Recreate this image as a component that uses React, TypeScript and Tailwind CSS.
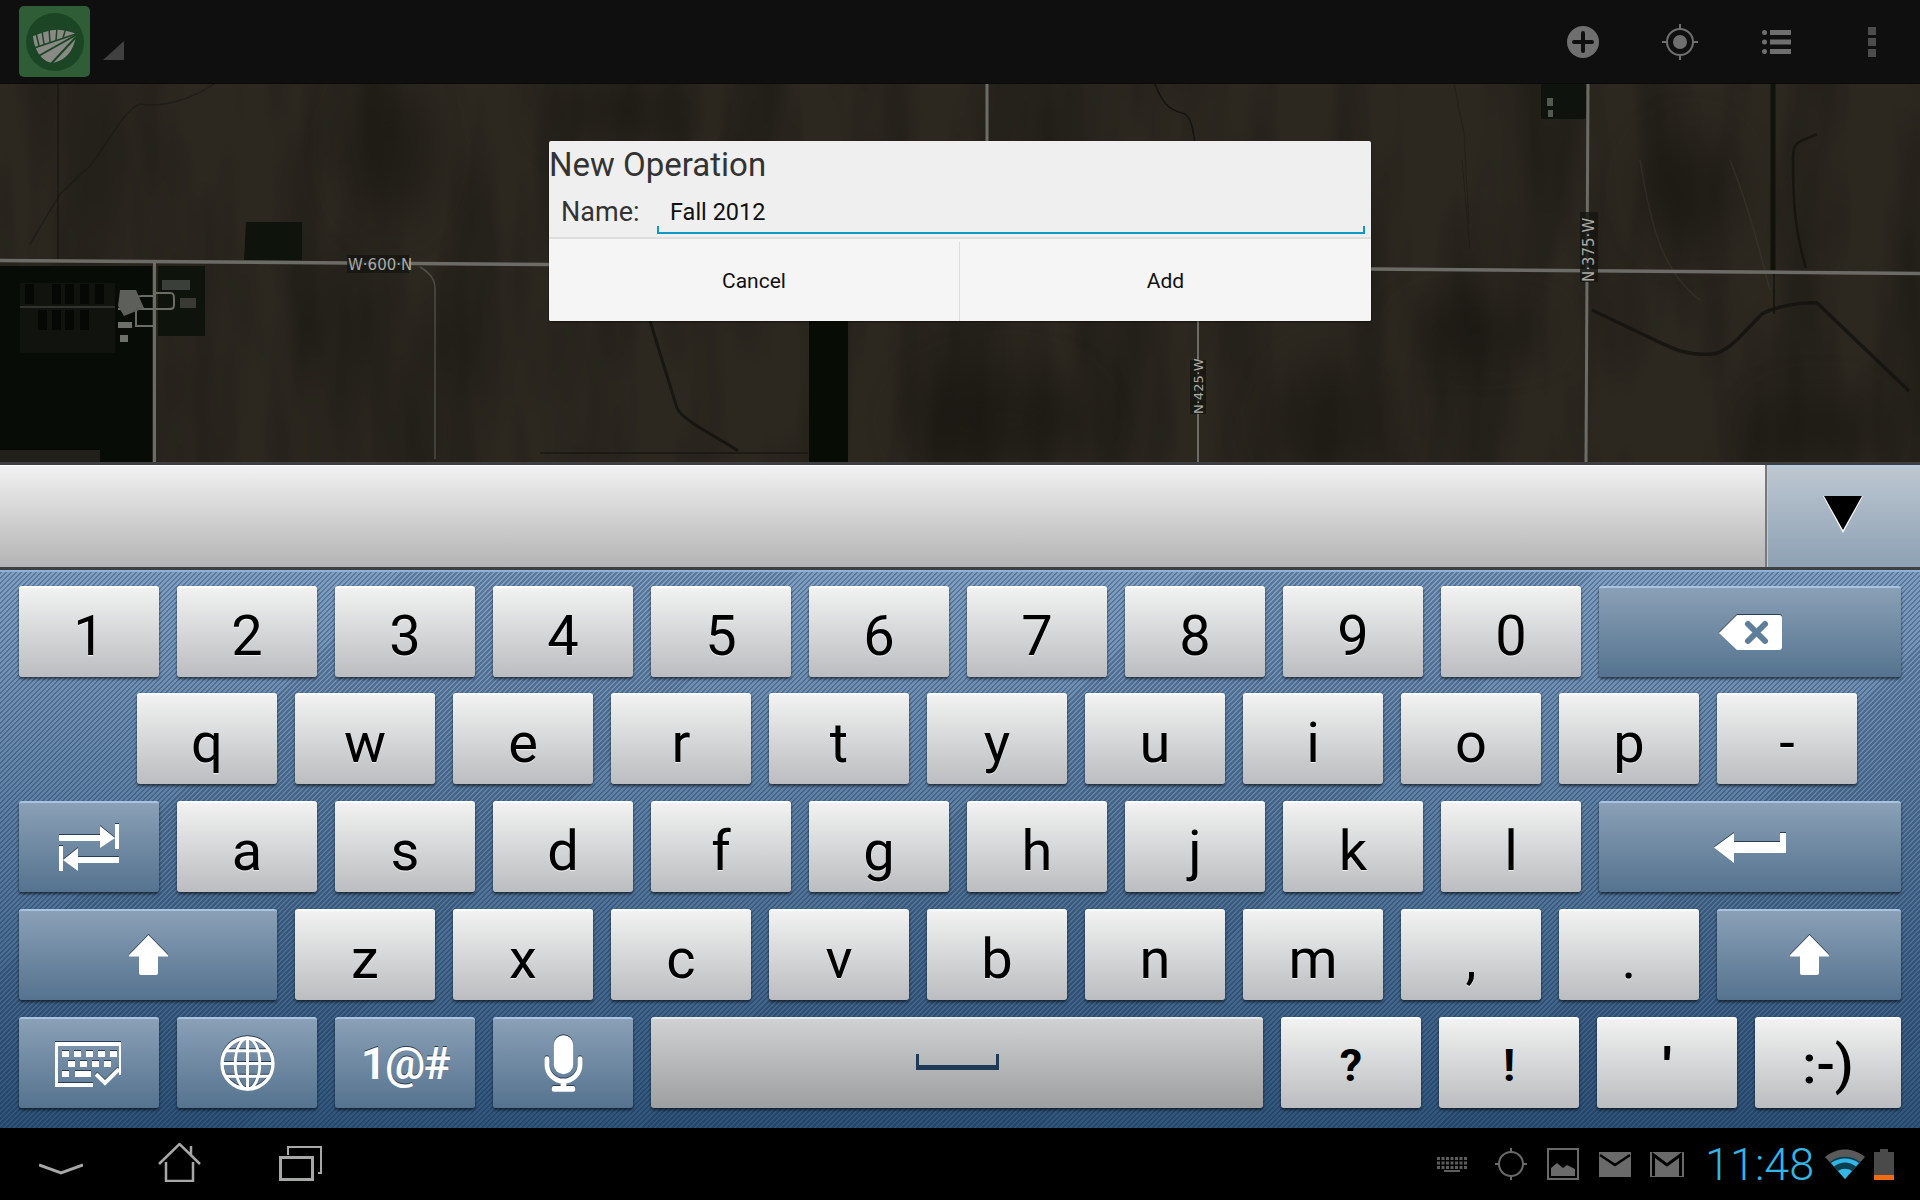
import type { ReactNode } from 'react'

const iconEdge = 'drop-shadow-[0_-1px_0_#2b3d52]'

function Key({
  width = 140,
  kind = 'white',
  children,
}: {
  width?: number
  kind?: 'white' | 'blue' | 'space'
  children?: ReactNode
}) {
  const look =
    kind === 'blue'
      ? 'bg-linear-to-b from-[#8aa0b6] to-[#55738f] border-t-[#a9c4e0] text-white'
      : kind === 'space'
        ? 'bg-linear-to-b from-[#d0d1d2] to-[#9e9fa1] border-t-[#e6e7e7] text-black'
        : 'bg-linear-to-b from-[#f1f2f1] to-[#bcbdc0] border-t-white text-black'
  return (
    <div
      style={{ width }}
      className={`${look} relative flex h-[91px] shrink-0 items-center justify-center rounded-[3px] border-t-2 shadow-[0_2px_3px_rgba(0,0,0,0.6)]`}
    >
      {children}
    </div>
  )
}

function Letter({ children }: { children: string }) {
  return (
    <span className="pt-[6px] text-[56px] leading-none font-normal [text-shadow:0_1px_1px_rgba(255,255,255,0.7)]">
      {children}
    </span>
  )
}

function ShiftIcon() {
  return (
    <svg viewBox="0 0 39 41" className={`-mt-[2px] h-[41px] w-[39px] ${iconEdge}`}>
      <path d="M19.5 1 39 21v1.500H29V39a2 2 0 0 1-2 2H12a2 2 0 0 1-2-2V22.500H0V21z" fill="#fff" />
    </svg>
  )
}

function BackspaceIcon() {
  return (
    <svg viewBox="0 0 63 35" className={`h-[35px] w-[63px] ${iconEdge}`}>
      <path d="M18 0h42a3 3 0 0 1 3 3v29a3 3 0 0 1-3 3H18L0 18z" fill="#fff" />
      <path d="M29 9l17 17M46 9 29 26" stroke="#5f7e9b" strokeWidth="6" strokeLinecap="round" />
    </svg>
  )
}

function TabIcon() {
  return (
    <svg viewBox="0 0 60 47" className={`h-[47px] w-[60px] ${iconEdge}`}>
      <g fill="#fff">
        <rect x="0" y="11" width="42" height="6" />
        <path d="M41 2 56 14 41 24z" />
        <rect x="56" y="0" width="4" height="25" />
        <rect x="18" y="33" width="42" height="6" />
        <path d="M19 24 4 36l15 11z" />
        <rect x="0" y="22" width="4" height="25" />
      </g>
    </svg>
  )
}

function EnterIcon() {
  return (
    <svg viewBox="0 0 72 30" className={`h-[30px] w-[72px] ${iconEdge}`}>
      <path d="M20 0v9h46V0h6v20H20v10L0 14.500z" fill="#fff" />
    </svg>
  )
}

function KeyboardIcon() {
  const top = [17, 29, 41, 53]
  return (
    <svg viewBox="0 0 68 46" className={`h-[46px] w-[68px] ${iconEdge}`}>
      <path d="M0 1h66v33h-2V5H3v37h35v4H0z" fill="#fff" />
      <g fill="#fff">
        <rect x="7" y="10" width="7" height="6" />
        {top.map((x) => (
          <rect key={x} x={x + 2} y="10" width="7" height="6" />
        ))}
        {[13, 25, 37, 49].map((x) => (
          <rect key={x} x={x} y="20" width="7" height="6" />
        ))}
        <rect x="7" y="30" width="7" height="6" />
        <rect x="20" y="30" width="16" height="6" />
      </g>
      <path d="M41 33l9 9 14-14" fill="none" stroke="#fff" strokeWidth="4" />
    </svg>
  )
}

function GlobeIcon() {
  return (
    <svg viewBox="0 0 56 56" className={`h-[55px] w-[55px] ${iconEdge}`}>
      <g fill="none" stroke="#fff" strokeWidth="3">
        <ellipse cx="28" cy="28" rx="26" ry="26" strokeWidth="3.500" />
        <ellipse cx="28" cy="28" rx="12.500" ry="26" />
        <path d="M28 2v52M2 28h52M6 15h44M6 41h44" />
      </g>
    </svg>
  )
}

function MicIcon() {
  return (
    <svg viewBox="0 0 40 58" className={`h-[57px] w-[39px] ${iconEdge}`}>
      <rect x="10" y="0" width="20" height="40" rx="10" fill="#fff" />
      <path d="M3 24v6a17 17 0 0 0 34 0v-6" fill="none" stroke="#fff" strokeWidth="5" strokeLinecap="round" />
      <rect x="17" y="46" width="6" height="8" fill="#fff" />
      <rect x="8" y="52" width="24" height="6" rx="2" fill="#fff" />
    </svg>
  )
}

function SpaceIcon() {
  return (
    <svg viewBox="0 0 83 20" className="-mt-[3px] h-[20px] w-[83px]">
      <path d="M1.500 2v11M81.500 2v11" fill="none" stroke="#1f3a57" strokeWidth="3" />
      <path d="M0 15.500h83" fill="none" stroke="#1f3a57" strokeWidth="5" />
    </svg>
  )
}

function MapLayer() {
  return (
    <svg viewBox="0 84 1920 378" className="absolute inset-0 h-full w-full">
      <defs>
        <filter id="soft" x="-40%" y="-40%" width="180%" height="180%" colorInterpolationFilters="sRGB">
          <feGaussianBlur stdDeviation="22" />
        </filter>
        <filter id="streak" x="0" y="0" width="100%" height="100%" colorInterpolationFilters="sRGB">
          <feTurbulence type="fractalNoise" baseFrequency="0.018 0.004" numOctaves="3" seed="7" />
          <feColorMatrix values="0 0 0 0 0  0 0 0 0 0  0 0 0 0 0  0 0 0 1.700 -0.620" />
        </filter>
      </defs>
      <rect x="0" y="84" width="1920" height="378" fill="#2c2820" />
      <rect x="0" y="84" width="1920" height="378" filter="url(#streak)" opacity="0.3" />
      <g filter="url(#soft)" fill="#17150f" opacity="0.55">
        <ellipse cx="390" cy="150" rx="40" ry="70" />
        <ellipse cx="620" cy="110" rx="70" ry="30" />
        <ellipse cx="1000" cy="420" rx="90" ry="50" />
        <ellipse cx="1330" cy="420" rx="50" ry="60" />
        <ellipse cx="1480" cy="330" rx="70" ry="20" />
        <ellipse cx="1820" cy="430" rx="60" ry="30" />
        <ellipse cx="1690" cy="190" rx="45" ry="55" />
      </g>

      {/* tree lines and farm yards */}
      <rect x="0" y="266" width="152" height="196" fill="#070c06" />
      <rect x="0" y="450" width="100" height="12" fill="#22201a" />
      <rect x="158" y="266" width="47" height="70" fill="#0e130c" />
      <rect x="20" y="283" width="95" height="70" fill="#11140e" />
      {[25, 52, 65, 80, 95].map((x) => (
        <rect key={x} x={x} y="284" width="9" height="20" fill="#060806" />
      ))}
      {[38, 52, 65, 80].map((x) => (
        <rect key={x} x={x} y="310" width="9" height="20" fill="#060806" />
      ))}
      <path d="M246 222h56v38h-58z" fill="#0e140c" />
      <rect x="809" y="321" width="39" height="141" fill="#070c05" />
      <rect x="1541" y="84" width="45" height="35" rx="2" fill="#0e130d" />
      <rect x="1547" y="98" width="6" height="8" fill="#55584f" />
      <rect x="1548" y="110" width="5" height="7" fill="#55584f" />
      <path d="M1773 84v186" stroke="#0b1008" strokeWidth="5" fill="none" opacity="0.85" />

      {/* field drains */}
      <g fill="none" stroke="#15130f">
        <path d="M58 84v176" strokeWidth="1.500" opacity="0.7" />
        <path d="M214 84c-20 14-50 24-74 20-16 6-30 36-50 62l-30 28-30 50" strokeWidth="1.500" opacity="0.45" />
        <path d="M1592 310l50 24c30 14 42 22 70 20 16-1 30-20 50-40 14-8 40-12 55-11l92 88" strokeWidth="3.500" opacity="0.85" />
        <path d="M1817 134l-18 8c-6 4-6 10-6 20 0 40 2 70 13 106" strokeWidth="2.500" opacity="0.8" />
        <path d="M1774 272v42" strokeWidth="1.500" />
        <path d="M650 321l27 87c6 14 50 34 61 43" strokeWidth="3" opacity="0.85" />
        <path d="M540 453h268" strokeWidth="1.500" opacity="0.8" />
        <path d="M1155 84c10 26 18 26 30 30 8 6 8 20 10 28" strokeWidth="1.500" />
        <path d="M1454 84l10 50 5 90M1462 160l8 90" strokeWidth="1" opacity="0.4" />
      </g>
      <path d="M1640 160c10 60 20 110 60 140M1730 160c24 60 34 110 40 130" fill="none" stroke="#47433a" strokeWidth="1.500" opacity="0.35" />

      {/* roads */}
      <g fill="none" stroke="#6c6c67">
        <path d="M0 260.500 549 264.500" strokeWidth="3.500" />
        <path d="M1371 269 1920 273.500" strokeWidth="3.500" />
        <path d="M154.500 260v202" strokeWidth="3" />
        <path d="M1588 84 1586 462" strokeWidth="3" />
        <path d="M1198 321v141" strokeWidth="2" />
        <path d="M987 84v57" strokeWidth="3" />
        <path d="M420 267c10 6 15 12 15 22v170" strokeWidth="1.500" opacity="0.55" />
        <path d="M154 296h-12c-5 0-6 2-6 8v22h18M154 293h16c4 0 4 2 4 8v4c0 4-2 4-6 4h-14M154 309h-36" strokeWidth="2" />
        <path d="M20 307h95" strokeWidth="1" opacity="0.7" />
      </g>
      <path d="M120 290l16 0 8 18-20 8-6-10z" fill="#5c5f5a" />
      <rect x="118" y="322" width="14" height="6" fill="#6e6f69" />
      <rect x="120" y="335" width="8" height="7" fill="#6e6f69" />
      <rect x="162" y="280" width="28" height="10" fill="#5a5e58" opacity="0.6" />
      <rect x="180" y="298" width="16" height="10" fill="#4c4c44" opacity="0.7" />

      {/* road labels */}
      <g fontFamily="'DejaVu Sans', sans-serif" fontSize="15" fill="#aaaaa5">
        <rect x="347" y="255" width="62" height="18" fill="#151512" opacity="0.8" />
        <text x="348" y="270">W·600·N</text>
        <rect x="1580" y="212" width="18" height="70" fill="#151512" opacity="0.8" />
        <text transform="translate(1594 282) rotate(-90)">N·375·W</text>
        <rect x="1190" y="360" width="16" height="54" fill="#151512" opacity="0.8" />
        <text fontSize="13" transform="translate(1203 414) rotate(-90)">N·425·W</text>
      </g>
    </svg>
  )
}

function ActionBar() {
  return (
    <div className="flex h-[84px] shrink-0 items-center border-b border-[#0a0a0a] bg-[#0f0f0f]">
      <div className="ml-[19px] flex h-[71px] w-[71px] items-center justify-center rounded-[5px] bg-[#2f5d35]">
        <svg viewBox="0 0 58 58" className="h-[58px] w-[58px]">
          <circle cx="29" cy="29" r="29" fill="#1c4526" />
          <path d="M7 23c10-3 18-7 27-6 6 .5 12 2 16 4-1 15-10 27-24 29C15 48 8 36 7 23z" fill="#8a8a85" />
          <g stroke="#1c4526" fill="none">
            <path d="M50 21 5 36" strokeWidth="1.800" />
            <path d="M50 22 9 45" strokeWidth="2" />
            <path d="M50 24 24 52" strokeWidth="2" />
            <path d="M13 33 10 20M18 31 16 18M24 29 23 16M30 27 31 15M37 25 40 15" strokeWidth="1.500" />
          </g>
        </svg>
      </div>
      <svg viewBox="0 0 21 19" className="mt-[18px] ml-[13px] h-[19px] w-[21px]">
        <path d="M21 0v19H0z" fill="#404040" />
      </svg>
      <div className="flex-1" />
      <svg viewBox="0 0 34 34" className="mr-[62px] h-[34px] w-[34px]">
        <circle cx="17" cy="17" r="16" fill="#6f6f6f" />
        <path d="M17 8v18M8 17h18" stroke="#0f0f0f" strokeWidth="4" strokeLinecap="round" />
      </svg>
      <svg viewBox="0 0 36 36" className="mr-[64px] h-[36px] w-[36px]">
        <circle cx="18" cy="18" r="7" fill="#6f6f6f" />
        <circle cx="18" cy="18" r="13" fill="none" stroke="#6f6f6f" strokeWidth="2" />
        <path d="M18 0v6M18 30v6M0 18h6M30 18h6" stroke="#6f6f6f" strokeWidth="2" />
      </svg>
      <svg viewBox="0 0 29 24" className="mr-[77px] h-[24px] w-[29px]">
        <g fill="#6f6f6f">
          <circle cx="2.500" cy="2.500" r="2.500" />
          <circle cx="2.500" cy="12" r="2.500" />
          <circle cx="2.500" cy="21.500" r="2.500" />
          <rect x="8" y="0" width="21" height="5" />
          <rect x="8" y="9.500" width="21" height="5" />
          <rect x="8" y="19" width="21" height="5" />
        </g>
      </svg>
      <div className="mr-[44px] flex flex-col gap-[3px]">
        <div className="h-[8px] w-[8px] bg-[#4c4c4c]" />
        <div className="h-[8px] w-[8px] bg-[#4c4c4c]" />
        <div className="h-[8px] w-[8px] bg-[#4c4c4c]" />
      </div>
    </div>
  )
}

function NewOperationDialog() {
  return (
    <div className="absolute top-[57px] left-[549px] flex h-[180px] w-[822px] flex-col rounded-[2px] bg-[#efefef] font-['Roboto',sans-serif] shadow-[0_1px_2px_rgba(0,0,0,0.5)]">
      <div className="h-[48px] pt-[5px] text-[33px] leading-[38px] text-[#333333]">New Operation</div>
      <div className="flex h-[50px] items-start border-b-2 border-[#dedede]">
        <div className="ml-[12px] w-[96px] pt-[8px] text-[27px] leading-[30px] text-[#333333]">Name:</div>
        <div className="relative h-[45px] w-[708px] border-b-2 border-[#0e9ac4] pt-[8px] pl-[13px] text-[23.500px] leading-[30px] text-[#111111]">
          Fall 2012
          <div className="absolute bottom-0 left-0 h-[6px] w-[2px] bg-[#0e9ac4]" />
          <div className="absolute right-0 bottom-0 h-[6px] w-[2px] bg-[#0e9ac4]" />
        </div>
      </div>
      <div className="flex flex-1 rounded-b-[2px] bg-[#f5f5f5] pt-[3px] text-[21px] text-[#111111]">
        <div className="flex w-[411px] items-center justify-center border-r border-[#dddddd]">Cancel</div>
        <div className="flex flex-1 items-center justify-center">Add</div>
      </div>
    </div>
  )
}

function CandidateStrip() {
  return (
    <div className="flex h-[108px] shrink-0 border-y-[3px] border-y-[#3d3f42]">
      <div className="flex-1 border-t border-white bg-linear-to-b from-[#f0f1f0] to-[#b4b4b4]" />
      <div className="w-[2px] bg-[#77797b]" />
      <div className="flex w-[153px] items-center justify-center border-t-2 border-l border-[#b5cce4] bg-linear-to-b from-[#bdc7d1] to-[#8da1b4]">
        <svg viewBox="0 0 40 37" className="mr-[3px] mb-[6px] h-[37px] w-[40px]">
          <path d="M0 0h40L20 37z" fill="#fff" />
          <path d="M1 0h38L20 34z" fill="#000" />
        </svg>
      </div>
    </div>
  )
}

function Keyboard() {
  return (
    <div className="flex h-[558px] shrink-0 flex-col gap-[17px] border-t-2 border-[#93b2d3] bg-[repeating-linear-gradient(135deg,rgba(10,30,60,0.3)_0_1.770px,transparent_1.770px_3.540px),linear-gradient(#7f9fc2,#30557b)] px-[19px] pt-[14px] font-['Roboto',sans-serif]">
      <div className="-mb-[1px] flex gap-[18px]">
        {'1234567890'.split('').map((c) => (
          <Key key={c}>
            <Letter>{c}</Letter>
          </Key>
        ))}
        <Key width={302} kind="blue">
          <BackspaceIcon />
        </Key>
      </div>
      <div className="flex gap-[18px] pl-[118px]">
        {'qwertyuiop-'.split('').map((c) => (
          <Key key={c}>
            <Letter>{c}</Letter>
          </Key>
        ))}
      </div>
      <div className="flex gap-[18px]">
        <Key kind="blue">
          <TabIcon />
        </Key>
        {'asdfghjkl'.split('').map((c) => (
          <Key key={c}>
            <Letter>{c}</Letter>
          </Key>
        ))}
        <Key width={302} kind="blue">
          <EnterIcon />
        </Key>
      </div>
      <div className="flex gap-[18px]">
        <Key width={258} kind="blue">
          <ShiftIcon />
        </Key>
        {'zxcvbnm,.'.split('').map((c) => (
          <Key key={c}>
            <Letter>{c}</Letter>
          </Key>
        ))}
        <Key width={184} kind="blue">
          <ShiftIcon />
        </Key>
      </div>
      <div className="flex gap-[18px]">
        <Key kind="blue">
          <KeyboardIcon />
        </Key>
        <Key kind="blue">
          <GlobeIcon />
        </Key>
        <Key kind="blue">
          <span className="text-[45px] leading-none font-semibold tracking-[-1.500px] [text-shadow:0_-1px_0_#2b3d52]">1@#</span>
        </Key>
        <Key kind="blue">
          <MicIcon />
        </Key>
        <Key width={612} kind="space">
          <SpaceIcon />
        </Key>
        <Key>
          <span className="pt-[4px] text-[45px] leading-none font-bold">?</span>
        </Key>
        <Key>
          <span className="pt-[4px] text-[45px] leading-none font-bold">!</span>
        </Key>
        <Key>
          <span className="pt-[4px] text-[50px] leading-none font-black">'</span>
        </Key>
        <Key width={146}>
          <span className="pt-[3px] text-[54px] leading-none font-medium">:-)</span>
        </Key>
      </div>
    </div>
  )
}

function NavBar() {
  return (
    <div className="flex h-[72px] shrink-0 items-center bg-black">
      <svg viewBox="0 0 44 12" className="mt-[10px] ml-[39px] h-[12px] w-[44px]">
        <path d="M0 2 22 10 44 2" fill="none" stroke="#a5a8a5" strokeWidth="3" />
      </svg>
      <svg viewBox="0 0 43 39" className="-mt-[3px] ml-[75px] h-[39px] w-[43px]">
        <path d="M1 21 21.500 1 42 21M33 3v10M8 19v19h27V19" fill="none" stroke="#a5a8a5" strokeWidth="2.500" />
      </svg>
      <svg viewBox="0 0 43 35" className="-mt-[2px] ml-[78px] h-[35px] w-[43px]">
        <path d="M9 9V1h33v26h-3" fill="none" stroke="#a5a8a5" strokeWidth="2" />
        <rect x="1.500" y="11.500" width="32" height="22" fill="none" stroke="#a5a8a5" strokeWidth="3" />
      </svg>
      <div className="flex-1" />
      <svg viewBox="0 0 30 15" className="mr-[28px] h-[15px] w-[30px]">
        <g fill="none" stroke="#5d5d5d" strokeWidth="3" strokeDasharray="3 1.500">
          <path d="M0 1.500h30M0 6h30M0 10.500h30" />
        </g>
        <rect x="7" y="13" width="16" height="2" fill="#5d5d5d" />
      </svg>
      <svg viewBox="0 0 32 32" className="mr-[20px] h-[32px] w-[32px]">
        <circle cx="16" cy="16" r="12" fill="none" stroke="#6a6a6a" strokeWidth="2" />
        <path d="M16 0v5M16 27v5M0 16h5M27 16h5" stroke="#6a6a6a" strokeWidth="2" />
      </svg>
      <svg viewBox="0 0 32 32" className="mr-[20px] h-[32px] w-[32px]">
        <rect x="1" y="1" width="30" height="30" fill="none" stroke="#6a6a6a" strokeWidth="2" />
        <path d="M4 28V20l6-5 6 5 4-3 8 4v7z" fill="#6a6a6a" />
      </svg>
      <svg viewBox="0 0 32 25" className="mr-[19px] h-[25px] w-[32px]">
        <rect x="0" y="0" width="32" height="25" fill="#6a6a6a" />
        <path d="M1 3 16 13 31 3" fill="none" stroke="#000" strokeWidth="2.500" />
      </svg>
      <svg viewBox="0 0 34 25" className="mr-[21px] h-[25px] w-[34px]">
        <rect x="0" y="0" width="34" height="25" fill="#6a6a6a" />
        <path d="M3.500 24V3L17 13 30.500 3v21" fill="none" stroke="#000" strokeWidth="3" />
      </svg>
      <span className="mr-[14px] w-[106px] text-center font-['Roboto',sans-serif] text-[45px] leading-none font-light text-[#33b5e5]">
        11:48
      </span>
      <svg viewBox="0 0 40 30" className="mr-[9px] h-[30px] w-[40px]">
        <path d="M0 8C12-2 28-2 40 8L20 30z" fill="#5a5a5a" />
        <path d="M5 13C13 6 27 6 35 13L20 30z" fill="#0a3f52" />
        <path d="M6 14C14 8 26 8 34 14l-3 3.500C24 12 16 12 9 17.500zM13 22c4-3 10-3 14 0l-7 8z" fill="#33b5e5" />
      </svg>
      <svg viewBox="0 0 20 31" className="mr-[26px] h-[31px] w-[20px]">
        <rect x="6" y="0" width="8" height="3" fill="#4a4a4a" />
        <rect x="0" y="3" width="20" height="23" fill="#4a4a4a" />
        <rect x="0" y="26" width="20" height="5" fill="#f26a12" />
      </svg>
    </div>
  )
}

export default function App() {
  return (
    <div className="flex h-[1200px] w-[1920px] flex-col overflow-hidden bg-black">
      <ActionBar />
      <div className="relative h-[378px] shrink-0">
        <MapLayer />
        <NewOperationDialog />
      </div>
      <CandidateStrip />
      <Keyboard />
      <NavBar />
    </div>
  )
}
